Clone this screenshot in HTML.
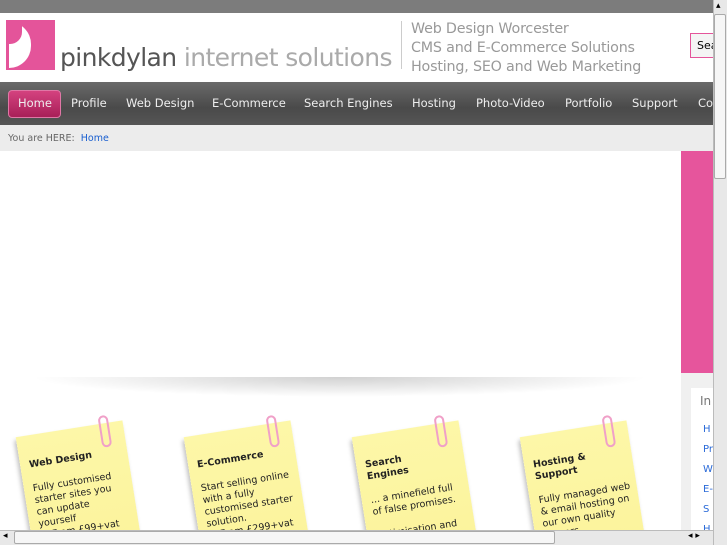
<!DOCTYPE html><html><head><style>
html,body{margin:0;width:727px;height:545px;overflow:hidden}
body{font-family:"DejaVu Sans","Liberation Sans",sans-serif;position:relative;background:#fff}
div{box-sizing:border-box}
.a{position:absolute}
.nav span{position:absolute;top:96px;color:#eee;font-size:11.5px}
.clipbox{position:absolute;left:0;top:0;width:713px;height:530px;overflow:hidden}
.note{position:absolute;width:108px;height:140px;background:linear-gradient(#fdf7a8,#fbf39a);box-shadow:-2px 3px 4px rgba(0,0,0,.25);transform:rotate(-9deg);padding:24px 6px 0 9px;font-size:9.5px;color:#222;line-height:12px}
.note b{display:block;margin-bottom:12px}
.clip{position:absolute;top:-8px;right:14px;width:10px;height:32px;border:2px solid #f0a0c8;border-radius:6px}
</style></head><body>
<div class="clipbox">
<div class="a" style="left:0;top:0;width:727px;height:13px;background:#7c7c7c"></div>
<div class="a" style="left:0;top:13px;width:713px;height:70px;background:#fff"></div>
<div class="a" style="left:6px;top:20px;width:49px;height:50px;background:#e4549a"></div>
<div class="a" style="left:9px;top:22px;width:22px;height:46px;background:#fff;border-radius:0 24px 24px 0"></div>
<div class="a" style="left:9px;top:22px;width:13px;height:22px;background:#e4549a;border-radius:0 0 12px 0"></div>
<div class="a" style="left:60px;top:43px;font-size:25px;color:#555;letter-spacing:-.6px;white-space:nowrap">pinkdylan <span style="color:#aaa">internet solutions</span></div>
<div class="a" style="left:401px;top:21px;width:1px;height:48px;background:#ccc"></div>
<div class="a" style="left:411px;top:20px;font-size:14.3px;color:#999;line-height:19px;white-space:nowrap;letter-spacing:-.2px">Web Design Worcester<br>CMS and E-Commerce Solutions<br>Hosting, SEO and Web Marketing</div>
<div class="a" style="left:690px;top:33px;width:24px;height:25px;border:1px solid #e4549a;background:#f4f4f4;font-size:11px;padding:5px 0 0 6px;overflow:hidden">Sea</div>
<div class="a" style="left:0;top:82px;width:713px;height:43px;background:linear-gradient(#6a6a6a,#4a4a4a 60%,#555)"></div>
<div class="a" style="left:8px;top:90px;width:53px;height:28px;background:linear-gradient(#d4427f,#a81f58);border-radius:4px;border:1px solid #e077a6"></div>
<div class="nav"><span style="left:18px">Home</span><span style="left:71px">Profile</span><span style="left:126px">Web Design</span><span style="left:212px">E-Commerce</span><span style="left:304px">Search Engines</span><span style="left:412px">Hosting</span><span style="left:476px">Photo-Video</span><span style="left:565px">Portfolio</span><span style="left:632px">Support</span><span style="left:698px">Co</span></div>
<div class="a" style="left:0;top:125px;width:713px;height:26px;background:#ececec;font-size:9.5px;color:#666;padding:8px 0 0 8px">You are HERE:&nbsp; <span style="color:#1a5fd0">Home</span></div>
<div class="a" style="left:681px;top:151px;width:32px;height:222px;background:#e6559c"></div>
<div class="a" style="left:681px;top:373px;width:32px;height:160px;background:#f0f0f0"></div>
<div class="a" style="left:691px;top:388px;width:22px;height:145px;background:#fff;font-size:12px;color:#777;padding:6px 0 0 9px">In</div>
<div class="a" style="left:703px;top:420px;font-size:10px;color:#2a6ad8;line-height:20px">H<br>Pr<br>W<br>E-<br>S<br>H</div>
<div class="a" style="left:30px;top:377px;width:620px;height:20px;background:radial-gradient(ellipse at top,rgba(0,0,0,.18),rgba(0,0,0,0) 70%)"></div>
<div class="note" style="left:26px;top:428px"><div class="clip"></div><b>Web Design</b>Fully customised starter sites you can update yourself<br>... From £99+vat<br><br>Professional fully custom design sites</div>
<div class="note" style="left:194px;top:428px"><div class="clip"></div><b>E-Commerce</b>Start selling online with a fully customised starter solution.<br>... From £299+vat<br><br>Professional bespoke e-commerce.</div>
<div class="note" style="left:362px;top:428px"><div class="clip"></div><b>Search<br>Engines</b>... a minefield full of false promises.<br><br>Optimisation and PPC solutions that you</div>
<div class="note" style="left:530px;top:428px"><div class="clip"></div><b>Hosting &amp;<br>Support</b>Fully managed web &amp; email hosting on our own quality servers.<br><br>24x7 server and site support and daily</div>
</div>
<div class="a" style="left:713px;top:0;width:14px;height:545px;background:#e8e8e8;border-left:1px solid #bbb"></div>
<div class="a" style="left:714px;top:14px;width:12px;height:165px;background:#f6f6f6;border:1px solid #aaa;border-radius:2px"></div>
<div class="a" style="left:0;top:530px;width:713px;height:15px;background:#e8e8e8;border-top:1px solid #bbb"></div>
<div class="a" style="left:14px;top:531px;width:541px;height:13px;background:#f6f6f6;border:1px solid #aaa;border-radius:2px"></div>
<div class="a" style="left:3px;top:531px;font-size:9px">◂</div>
<div class="a" style="left:688px;top:531px;font-size:9px">◂ ▸</div>
<div class="a" style="left:716px;top:1px;font-size:9px">▴</div>
</body></html>
